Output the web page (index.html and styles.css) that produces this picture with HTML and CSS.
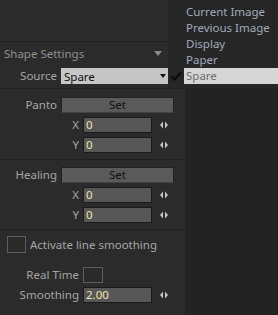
FILE: index.html
```html
<!DOCTYPE html>
<html lang="en">
<head>
    <meta charset="UTF-8">
    <title>Shape Settings</title>
    <link rel="stylesheet" href="styles.css">
</head>
<body>
    <div class="panel">
        <div class="top"></div>
        <div class="header">
            <span>Shape Settings</span>
            <span class="caret"></span>
        </div>
        <div class="group first">
            <div class="row">
                <label class="lbl">Source</label>
                <div class="select">
                    <span>Spare</span>
                    <span class="select-arrow"></span>
                </div>
            </div>
        </div>
        <div class="group pad-a">
            <div class="row">
                <label class="lbl">Panto</label>
                <div class="btn">Set</div>
            </div>
            <div class="row">
                <label class="lbl wide">X</label>
                <div class="field">0</div>
                <svg class="spin" width="8" height="8" viewBox="0 0 8 8"><path d="M3 0.5 L0 4 L3 7.5Z M5 0.5 L8 4 L5 7.5Z"/></svg>
            </div>
            <div class="row">
                <label class="lbl wide">Y</label>
                <div class="field">0</div>
                <svg class="spin" width="8" height="8" viewBox="0 0 8 8"><path d="M3 0.5 L0 4 L3 7.5Z M5 0.5 L8 4 L5 7.5Z"/></svg>
            </div>
        </div>
        <div class="group pad-b">
            <div class="row">
                <label class="lbl">Healing</label>
                <div class="btn">Set</div>
            </div>
            <div class="row">
                <label class="lbl wide">X</label>
                <div class="field">0</div>
                <svg class="spin" width="8" height="8" viewBox="0 0 8 8"><path d="M3 0.5 L0 4 L3 7.5Z M5 0.5 L8 4 L5 7.5Z"/></svg>
            </div>
            <div class="row">
                <label class="lbl wide">Y</label>
                <div class="field">0</div>
                <svg class="spin" width="8" height="8" viewBox="0 0 8 8"><path d="M3 0.5 L0 4 L3 7.5Z M5 0.5 L8 4 L5 7.5Z"/></svg>
            </div>
        </div>
        <div class="smooth">
            <div class="check-row">
                <span class="box big"></span>
                <span>Activate line smoothing</span>
            </div>
            <div class="row realtime">
                <label class="lbl wide">Real Time</label>
                <span class="box"></span>
            </div>
            <div class="row">
                <label class="lbl wide">Smoothing</label>
                <div class="field">2.00</div>
                <svg class="spin" width="8" height="8" viewBox="0 0 8 8"><path d="M3 0.5 L0 4 L3 7.5Z M5 0.5 L8 4 L5 7.5Z"/></svg>
            </div>
        </div>
    </div>

    <div class="menu">
        <div class="item">Current Image</div>
        <div class="item">Previous Image</div>
        <div class="item">Display</div>
        <div class="item">Paper</div>
        <div class="item active">
            <svg class="tick" width="12" height="10" viewBox="0 0 12 10"><path d="M1 5 L4.5 8.5 L11 1.5" fill="none" stroke="#0c0c0c" stroke-width="2.2"/></svg>
            Spare
        </div>
    </div>
</body>
</html>
```

FILE: styles.css
```css
body {
    margin: 0;
    background: #232323;
    font-family: 'Noto Sans', 'Open Sans', sans-serif;
    font-size: 11.5px;
    color: #a9a9a9;
    width: 278px;
    height: 315px;
    overflow: hidden;
    position: relative;
}
.panel {
    width: 185px;
    height: 315px;
    background: #2b2b2b;
}
.top {
    height: 41px;
    border-bottom: 1px solid #1e1e1e;
}
.header {
    height: 22px;
    display: flex;
    align-items: center;
    justify-content: space-between;
    padding: 0 23px 0 4px;
    color: #8f8f8f;
}
.caret {
    width: 0;
    height: 0;
    border-left: 4px solid transparent;
    border-right: 4px solid transparent;
    border-top: 5px solid #8a8a8a;
}
.group {
    border-bottom: 1px solid #1e1e1e;
    display: flex;
    flex-direction: column;
    gap: 4px;
}
.group.first {
    padding: 4px 0 4px;
}
.group.pad-a {
    padding: 8px 0 6px;
}
.group.pad-b {
    padding: 7px 0 6px;
}
.row {
    display: flex;
    align-items: center;
    height: 16px;
}
.lbl {
    width: 57px;
    margin-right: 4px;
    text-align: right;
    color: #a6a6a6;
    line-height: 16px;
}
.lbl.wide {
    width: 79px;
}
.select {
    width: 107px;
    height: 16px;
    box-sizing: border-box;
    background: #c6c6c6;
    color: #101010;
    display: flex;
    align-items: center;
    justify-content: space-between;
    padding: 0 2px 0 3px;
}
.select-arrow {
    width: 0;
    height: 0;
    border-left: 3px solid transparent;
    border-right: 3px solid transparent;
    border-top: 4px solid #111;
}
.btn {
    width: 113px;
    height: 16px;
    box-sizing: border-box;
    background: #5a5a5a;
    border: 1px solid #222;
    border-bottom-color: #444;
    color: #121212;
    text-align: center;
    line-height: 14px;
}
.field {
    width: 69px;
    height: 16px;
    box-sizing: border-box;
    background: #575757;
    border: 1px solid #1b1b1b;
    color: #ece3a6;
    padding-left: 2px;
    line-height: 14px;
}
.spin {
    margin-left: 8px;
    fill: #c4c4c4;
}
.smooth {
    padding-top: 6px;
}
.check-row {
    display: flex;
    align-items: center;
    gap: 4px;
    height: 17px;
    padding-left: 7px;
    color: #a6a6a6;
}
.box {
    width: 20px;
    height: 16px;
    box-sizing: border-box;
    border: 1px solid #5e5e5e;
    background: #2a2a2a;
}
.box.big {
    width: 19px;
    height: 17px;
}
.realtime {
    margin: 14px 0 4px;
}
.menu {
    position: absolute;
    left: 168px;
    top: 0;
    width: 110px;
    height: 88px;
    background: #262626;
    padding-top: 4px;
    box-sizing: border-box;
}
.item {
    height: 16px;
    line-height: 16px;
    margin-left: 16px;
    padding-left: 2px;
    color: #a2aabb;
    position: relative;
}
.item.active {
    background: #d6d6d6;
    color: #6e6e6e;
}
.tick {
    position: absolute;
    left: -14px;
    top: 3px;
}
```
